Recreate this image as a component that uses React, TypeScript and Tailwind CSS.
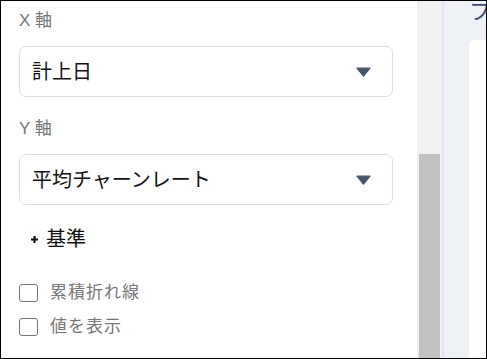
import React from "react";

const font = "font-['Liberation_Sans','Noto_Sans_CJK_JP',sans-serif]";

function Caret() {
  return (
    <svg width="15" height="10" viewBox="0 0 15 10" className="shrink-0">
      <path d="M1 1.2 H14 L7.5 9.2 Z" fill="#475569" stroke="#475569" strokeWidth="1.2" strokeLinejoin="round" />
    </svg>
  );
}

function SelectBox({ value }: { value: string }) {
  return (
    <div className="h-[51px] w-[374px] rounded-[7px] border border-[#dcdde9] bg-white flex items-center justify-between pl-[12px] pr-[21px]">
      <span className="text-[20px] leading-[28px] text-[#111]">{value}</span>
      <Caret />
    </div>
  );
}

function Check({ label }: { label: string }) {
  return (
    <label className="h-[24px] flex items-center">
      <span className="w-[19px] h-[18px] rounded-[3px] border border-[#767676] bg-white shrink-0" />
      <span className="ml-[12px] text-[17px] leading-[24px] tracking-[1px] text-[#777]">{label}</span>
    </label>
  );
}

export default function App() {
  return (
    <div className={`w-[487px] h-[359px] border border-black flex overflow-hidden bg-white ${font}`}>
      {/* settings panel */}
      <div className="w-[416px] shrink-0 pl-[18px] pt-[8px] flex flex-col">
        <div className="text-[17px] leading-[24px] text-[#767676]">X 軸</div>
        <div className="mt-[13px]">
          <SelectBox value="計上日" />
        </div>
        <div className="mt-[20px] text-[17px] leading-[24px] text-[#767676]">Y 軸</div>
        <div className="mt-[13px]">
          <SelectBox value="平均チャーンレート" />
        </div>
        <div className="mt-[20px] pl-[12px] h-[28px] flex items-center gap-[8px]">
          <svg width="7" height="7" viewBox="0 0 7 7">
            <path d="M3.5 0 V7 M0 3.5 H7" stroke="#111" strokeWidth="2.2" />
          </svg>
          <span className="text-[20px] leading-[28px] text-[#111]">基準</span>
        </div>
        <div className="mt-[28px] flex flex-col gap-[10px]">
          <Check label="累積折れ線" />
          <Check label="値を表示" />
        </div>
      </div>

      {/* scrollbar */}
      <div className="w-[25px] shrink-0 bg-[#f1f1f1] flex flex-col px-[2px]">
        <div className="mt-[153px] flex-1 bg-[#c1c1c1]" />
      </div>
      <div className="w-[2px] shrink-0 bg-[#e1e4f0]" />

      {/* preview area */}
      <div className="flex-1 bg-[#eef1f6] flex flex-col pl-[25px] overflow-hidden">
        <div className="-mt-[4px] h-[25px] text-[22px] leading-[30px] text-[#3b4a70] whitespace-nowrap">ファネル</div>
        <div className="mt-[18px] flex-1 bg-white rounded-tl-[6px]" />
      </div>
    </div>
  );
}
